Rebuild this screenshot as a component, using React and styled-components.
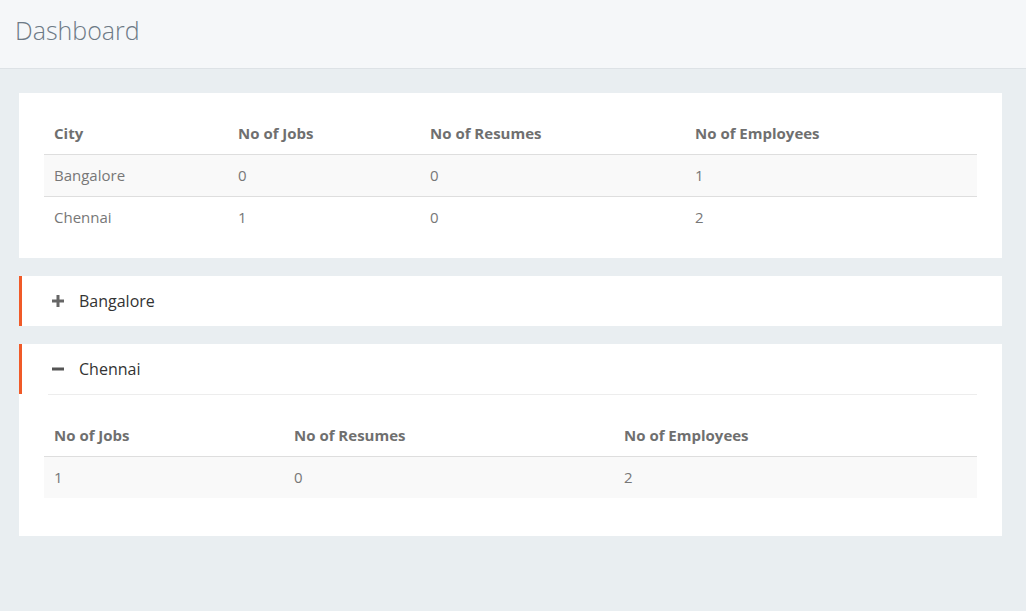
import styled, { createGlobalStyle } from 'styled-components'

const GlobalStyle = createGlobalStyle`
  html, body {
    margin: 0;
    padding: 0;
    background: #e9eef1;
    font-family: "Open Sans", "Liberation Sans", sans-serif;
  }
`

const Page = styled.div`
  min-height: 611px;
  background: #e9eef1;
`

const TopBar = styled.header`
  height: 68px;
  background: #f5f7f9;
  border-bottom: 1px solid #dde2e6;
  display: flex;
  align-items: center;
  padding-left: 15px;
`

const Title = styled.h1`
  margin: 0;
  font-size: 25px;
  font-weight: 300;
  color: #6d7a86;
  line-height: 1;
  padding-bottom: 8px;
`

const Main = styled.main`
  display: flex;
  flex-direction: column;
  gap: 18px;
  padding: 24px 24px 24px 19px;
`

const Card = styled.section`
  background: #fff;
  padding: 20px 25px;
`

const Table = styled.table`
  width: 100%;
  border-collapse: collapse;
  font-size: 15px;
  color: #777;
  table-layout: fixed;
`

const Th = styled.th`
  text-align: left;
  font-weight: 700;
  color: #6f6f6f;
  padding: 10px 10px;
  line-height: 21px;
  border-bottom: 1px solid #dedede;
  width: ${(p) => p.$w || 'auto'};
`

const Tr = styled.tr`
  background: ${(p) => (p.$striped ? '#f9f9f9' : '#fff')};
`

const Td = styled.td`
  padding: 10px 10px;
  line-height: 21px;
  color: #777;
  border-top: 1px solid #dedede;
`

const Accordion = styled.section`
  background: #fff;
`

const AccHead = styled.div`
  height: 50px;
  display: flex;
  align-items: center;
  gap: 15px;
  padding-left: 30px;
  border-left: 3px solid #f05a28;
  font-size: 16px;
  color: #333;
`

const Divider = styled.div`
  height: 1px;
  background: #ededed;
  margin: 0 25px 0 29px;
`

const AccBody = styled.div`
  padding: 20px 25px 38px 25px;
`

const Plus = () => (
  <svg width="12" height="12" viewBox="0 0 12 12">
    <rect x="4.5" y="0" width="3" height="12" fill="#666" />
    <rect x="0" y="4.5" width="12" height="3" fill="#666" />
  </svg>
)

const Minus = () => (
  <svg width="12" height="12" viewBox="0 0 12 12">
    <rect x="0" y="4.5" width="12" height="3" fill="#555" />
  </svg>
)

const cities = [
  { city: 'Bangalore', jobs: 0, resumes: 0, employees: 1 },
  { city: 'Chennai', jobs: 1, resumes: 0, employees: 2 },
]

export default function App() {
  return (
    <Page>
      <GlobalStyle />
      <TopBar>
        <Title>Dashboard</Title>
      </TopBar>
      <Main>
        <Card>
          <Table>
            <thead>
              <tr>
                <Th $w="164px">City</Th>
                <Th $w="172px">No of Jobs</Th>
                <Th $w="245px">No of Resumes</Th>
                <Th>No of Employees</Th>
              </tr>
            </thead>
            <tbody>
              {cities.map((c, i) => (
                <Tr key={c.city} $striped={i % 2 === 0}>
                  <Td>{c.city}</Td>
                  <Td>{c.jobs}</Td>
                  <Td>{c.resumes}</Td>
                  <Td>{c.employees}</Td>
                </Tr>
              ))}
            </tbody>
          </Table>
        </Card>

        <Accordion>
          <AccHead>
            <Plus />
            Bangalore
          </AccHead>
        </Accordion>

        <Accordion>
          <AccHead>
            <Minus />
            Chennai
          </AccHead>
          <Divider />
          <AccBody>
            <Table>
              <thead>
                <tr>
                  <Th $w="220px">No of Jobs</Th>
                  <Th $w="310px">No of Resumes</Th>
                  <Th>No of Employees</Th>
                </tr>
              </thead>
              <tbody>
                <Tr $striped>
                  <Td>1</Td>
                  <Td>0</Td>
                  <Td>2</Td>
                </Tr>
              </tbody>
            </Table>
          </AccBody>
        </Accordion>
      </Main>
    </Page>
  )
}
